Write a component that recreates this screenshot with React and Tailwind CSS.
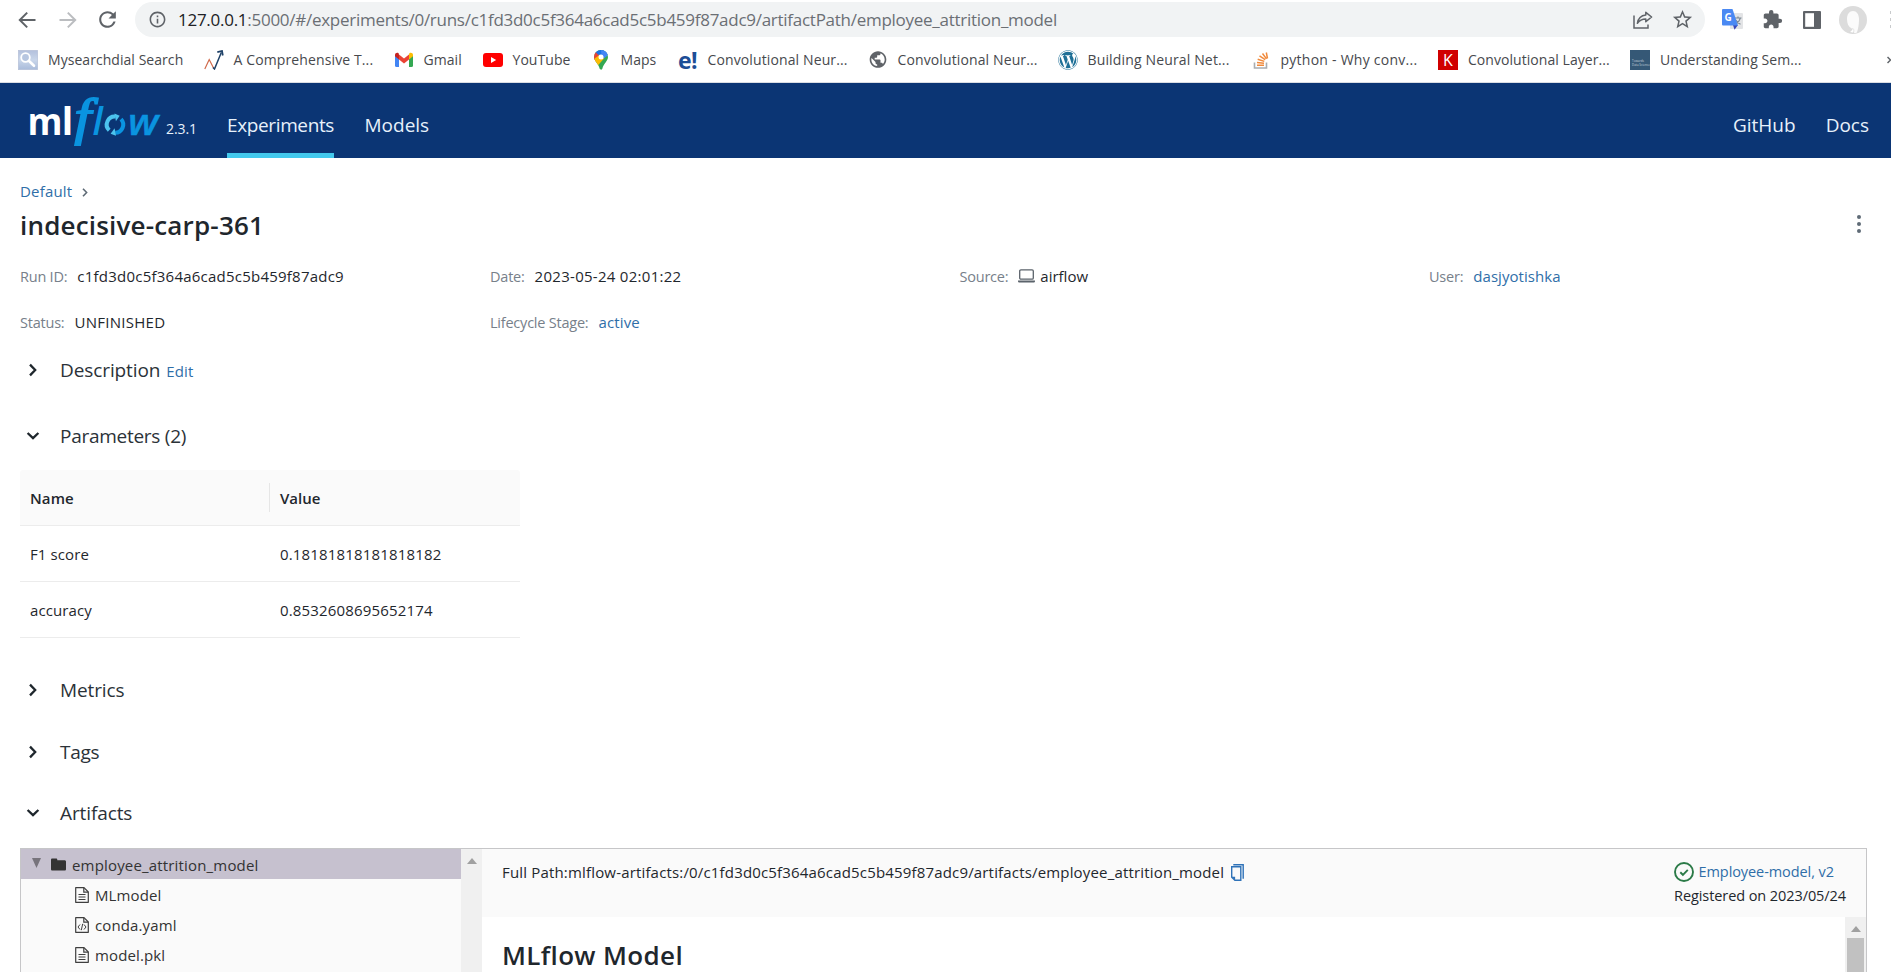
import React from "react";
import { MdExtension, MdInfoOutline, MdPublic, MdRefresh, MdStarBorder } from "react-icons/md";
import { FaWordpress } from "react-icons/fa";

/* ---------- browser chrome icons ---------- */

const Arrow = ({ className }) => (
  <svg viewBox="0 0 18 18" className={className} fill="none" stroke="currentColor" strokeWidth="2">
    <path d="M17.5 9H2M9.2 1.6 1.8 9l7.4 7.4" />
  </svg>
);

const ShareIcon = () => (
  <svg viewBox="0 0 20 18" className="h-[18px] w-[20px] text-[#5f6368]" fill="none" stroke="currentColor" strokeWidth="1.5">
    <path d="M1 4.500v12.500h14v-3.500" />
    <path d="M12.800 1.300 18.600 6l-5.800 4.700V8C8.800 8 6.400 9.400 4.400 12.300 5.100 7.800 8 4.500 12.800 4z" strokeLinejoin="round" />
  </svg>
);

const TranslateIcon = () => (
  <svg viewBox="0 0 21 21" className="h-[21px] w-[21px]">
    <rect x="8" y="4" width="13" height="16" rx="1" fill="#e3e4e6" />
    <path d="M12.500 9h7M16 7.500V9M18.300 9c-.5 2.500-2.300 4.600-4.600 6M13.800 11c1 2 2.600 3.400 4.700 4.300" stroke="#7b8794" strokeWidth="1.2" fill="none" />
    <path d="M11 16h5l-3.500 4.800z" fill="#3a49b8" />
    <path d="M1 0h9.500L16 16.500H1a1 1 0 0 1-1-1V1a1 1 0 0 1 1-1z" fill="#4a89f3" />
    <text x="2.500" y="12" fontSize="10" fontWeight="700" fill="#fff" fontFamily="Open Sans, sans-serif">G</text>
  </svg>
);

const SidePanelIcon = () => (
  <svg viewBox="0 0 18 18" className="h-[18px] w-[18px]">
    <rect width="18" height="18" rx="1" fill="#5f6368" />
    <rect x="2.200" y="2.200" width="8.800" height="13.600" fill="#fff" />
  </svg>
);

const Avatar = () => (
  <svg viewBox="0 0 28 28" className="h-[28px] w-[28px]">
    <circle cx="14" cy="14" r="14" fill="#dcdcdc" />
    <path d="M8 13c0-5 2.500-8 6-8s6 3 6 8c0 6-1 11-2.200 13.400-1 .8-2 .8-3 0-.6-1-.8-2.600-2-3.800C9.500 21 8 17.500 8 13z" fill="#fbfbfb" />
    <path d="M13.500 22.500c1.500 0 1.800 2 .8 4.500l-4-.8c1-.8 2.500-1.500 3.200-3.700z" fill="#fff" stroke="#cfcfcf" strokeWidth=".5" />
  </svg>
);

/* ---------- bookmark icons ---------- */

const SearchDial = () => (
  <svg viewBox="0 0 20 20" className="h-5 w-5">
    <defs>
      <linearGradient id="dial" x1="0" y1="0" x2="0" y2="1">
        <stop offset="0" stopColor="#b3c0dc" />
        <stop offset=".5" stopColor="#c9d6ea" />
        <stop offset="1" stopColor="#a9bbda" />
      </linearGradient>
    </defs>
    <rect x=".3" y=".3" width="19.400" height="19.400" fill="url(#dial)" stroke="#b4bfd6" strokeWidth=".6" />
    <circle cx="7.500" cy="7.500" r="4.300" fill="#b7c6e0" stroke="#fff" strokeWidth="1.800" />
    <path d="M10.800 10.800l5.200 5" stroke="#fff" strokeWidth="2.600" strokeLinecap="round" />
  </svg>
);

const TrendIcon = () => (
  <svg viewBox="0 0 20 20" className="h-5 w-5" fill="none">
    <path d="M.8 19 5.200 9.500 9.800 18.500" stroke="#d0694a" strokeWidth="1.200" />
    <path d="M9 17.500 10.500 19 17.300 2.500" stroke="#1f4268" strokeWidth="1.500" />
    <path d="M13.300 2.200 18 1l.8 4.500" stroke="#1f4268" strokeWidth="1.800" />
  </svg>
);

const GmailIcon = () => (
  <svg viewBox="0 0 20 20" className="h-5 w-5">
    <path d="M1 5v10.500A1.500 1.500 0 0 0 2.500 17H5V8.500z" fill="#4285f4" />
    <path d="M15 8.500V17h2.500a1.500 1.500 0 0 0 1.500-1.500V5z" fill="#34a853" />
    <path d="M15 4.500v5l4-3.200V5c0-2-2.200-2.800-3.600-1.700z" fill="#fbbc04" />
    <path d="M5 9.500v-5l5 4 5-4v5l-5 4z" fill="#ea4335" />
    <path d="M1 5v1.300l4 3.200v-5l-.4-1.200C3.200 2.200 1 3 1 5z" fill="#c5221f" />
  </svg>
);

const YouTubeIcon = () => (
  <svg viewBox="0 0 20 20" className="h-5 w-5">
    <rect y="3" width="20" height="14" rx="3" fill="#f00" />
    <path d="M8 7v6l5.200-3z" fill="#fff" />
  </svg>
);

const MapsIcon = () => (
  <svg viewBox="0 0 20 20" className="h-5 w-5">
    <defs>
      <clipPath id="pin">
        <path d="M10 0a7 7 0 0 1 7 7c0 4-4.500 6.500-5.600 11.500-.3 1.600-2.500 1.600-2.800 0C7.500 13.500 3 11 3 7a7 7 0 0 1 7-7z" />
      </clipPath>
    </defs>
    <g clipPath="url(#pin)">
      <rect width="20" height="20" fill="#34a853" />
      <path d="M0 0h20v3L10 8 0 0z" fill="#1a73e8" />
      <path d="M10 0h10v3l-9 7z" fill="#4285f4" />
      <path d="M0 0l4.500 2.200L10 7 5 12 0 9z" fill="#ea4335" />
      <path d="M2 9.800 9 4.500l4 4-7 8z" fill="#fbbc04" />
    </g>
    <circle cx="10" cy="7" r="2.500" fill="#fff" />
  </svg>
);

const EIcon = () => (
  <span className="flex h-5 w-5 items-center justify-center text-[23px] font-bold leading-[20px] tracking-[-0.5px] text-[#1d4e96]">e!</span>
);

const GlobeIcon = () => <MdPublic className="h-[21px] w-5 shrink-0 text-[#5f6368]" />;
const WpIcon = () => <FaWordpress className="h-5 w-5 text-[#1e6f96]" />;

const StackIcon = () => (
  <svg viewBox="0 0 20 20" className="h-5 w-5" fill="none">
    <path d="M3.500 12.500V18h12v-5.500" stroke="#a9adb1" strokeWidth="1.600" />
    <path d="M6 15.300h7M6 12.400l7 .9M6.700 9.200l6.600 2.200M8.500 5.900l5.700 3.700M11.500 3.500l4 5.400M15.300 2.500l1.200 6" stroke="#f08a3c" strokeWidth="1.500" />
  </svg>
);

const KIcon = () => (
  <span className="flex h-5 w-5 items-center justify-center bg-[#d00000] text-[16px] leading-none text-white">K</span>
);

const TdsIcon = () => (
  <span className="flex h-5 w-5 flex-col justify-end bg-[#355876] pb-[3px] pl-[2px] text-[3px] leading-[4px] text-[#c9d5df]">
    <span>Towards</span>
    <span>Data Science</span>
  </span>
);

const BOOKMARKS = [
  { icon: SearchDial, label: "Mysearchdial Search", box: "w-[185.5px]" },
  { icon: TrendIcon, label: "A Comprehensive T...", box: "w-[190px]", tracking: "tracking-[0.12px]" },
  { icon: GmailIcon, label: "Gmail", box: "w-[89px]" },
  { icon: YouTubeIcon, label: "YouTube", box: "w-[108px]" },
  { icon: MapsIcon, label: "Maps", box: "w-[87px]" },
  { icon: EIcon, label: "Convolutional Neur...", box: "w-[190px]", tracking: "tracking-[0.12px]" },
  { icon: GlobeIcon, label: "Convolutional Neur...", box: "w-[190px]", tracking: "tracking-[0.12px]" },
  { icon: WpIcon, label: "Building Neural Net...", box: "w-[193px]", tracking: "tracking-[0.15px]" },
  { icon: StackIcon, label: "python - Why conv...", box: "w-[187.5px]", tracking: "tracking-[0.25px]" },
  { icon: KIcon, label: "Convolutional Layer...", box: "w-[192px]" },
  { icon: TdsIcon, label: "Understanding Sem...", box: "w-[180px]" },
];

function BrowserBar() {
  return (
    <div className="bg-white">
      <div className="flex h-[38px] items-center pl-[18px] pt-[1px]">
        <Arrow className="h-[18px] w-[18px] shrink-0 text-[#5f6368]" />
        <Arrow className="ml-[23px] h-[18px] w-[18px] shrink-0 rotate-180 text-[#bbbdc0]" />
        <MdRefresh className="ml-[18px] h-[25px] w-[25px] shrink-0 text-[#5f6368]" />
        <div className="ml-[15px] flex h-[35px] w-[1570px] shrink-0 items-center rounded-full bg-[#f1f3f4] pl-[13px] pr-[11px]">
          <MdInfoOutline className="h-[19px] w-[19px] text-[#5f6368]" />
          <div className="ml-[11px] flex-1 whitespace-nowrap text-[17px] tracking-[-0.27px] text-[#6b6f74]">
            <span className="text-[#202124]">127.0.0.1</span>
            :5000/#/experiments/0/runs/c1fd3d0c5f364a6cad5c5b459f87adc9/artifactPath/employee_attrition_model
          </div>
          <ShareIcon />
          <MdStarBorder className="ml-[18px] h-[23px] w-[23px] text-[#5f6368]" />
        </div>
        <div className="ml-[17px] shrink-0"><TranslateIcon /></div>
        <MdExtension className="ml-[19px] h-[21px] w-[21px] shrink-0 text-[#5f6368]" />
        <div className="ml-[20px] shrink-0"><SidePanelIcon /></div>
        <div className="ml-[18px] shrink-0"><Avatar /></div>
        <div className="ml-[23px] flex w-[2px] shrink-0 flex-col gap-[4px] overflow-hidden">
          <i className="h-[3px] w-[3px] bg-[#c8cacc]" />
          <i className="h-[3px] w-[3px] bg-[#c8cacc]" />
          <i className="h-[3px] w-[3px] bg-[#c8cacc]" />
        </div>
      </div>
      <div className="flex h-[45px] items-center border-b border-[#dadde3] pb-[1px] pl-[18px]">
        {BOOKMARKS.map(({ icon: Icon, label, box, tracking = "tracking-[0.05px]" }, i) => (
          <div key={i} className={"flex shrink-0 items-center gap-[10px] whitespace-nowrap text-[14px] text-[#47494d] " + box}>
            <Icon />
            <span className={"pb-[1px] " + tracking}>{label}</span>
          </div>
        ))}
        <svg viewBox="0 0 4 8" className="ml-auto h-[8px] w-[4px]" fill="none" stroke="#5f6368" strokeWidth="1.500">
          <path d="M.5 1l3 3-3 3" />
        </svg>
      </div>
    </div>
  );
}

/* ---------- application header ---------- */

const Logo = () => (
  <svg viewBox="0 0 132 54" className="h-[54px] w-[132px] overflow-visible" fontFamily="Open Sans, sans-serif">
    <text x="-2.500" y="40" fontSize="37" fontWeight="700" fill="#fff" textLength="35" lengthAdjust="spacingAndGlyphs">m</text>
    <text x="31.800" y="40" fontSize="37.500" fontWeight="700" fill="#fff">l</text>
    <text transform="translate(44.500 38.500) scale(1.080 .93)" fontSize="55" fontStyle="italic" fontFamily="Liberation Serif, serif" fill="#0a94e0" stroke="#0a94e0" strokeWidth="1.900">f</text>
    <text x="62.500" y="40" fontSize="37.500" fontWeight="600" fontStyle="italic" fill="#0a94e0">l</text>
    <path d="M79.200 35.300a8 8 0 0 1 6.300-13.700" fill="none" stroke="#4cc3ee" strokeWidth="4" />
    <path d="M84.500 18.600l5.200 2.200-3.800 5.400z" fill="#4cc3ee" />
    <path d="M91 24.200a8 8 0 0 1-5.800 13.500" fill="none" stroke="#0a94e0" strokeWidth="4" />
    <path d="M86 40.800l-5.400-2 4-5.500z" fill="#4cc3ee" />
    <text x="98" y="40" fontSize="36" fontWeight="600" fontStyle="italic" fill="#0a94e0" stroke="#0a94e0" strokeWidth=".4" textLength="30.500" lengthAdjust="spacingAndGlyphs">w</text>
  </svg>
);

function Header() {
  return (
    <header className="flex h-[75px] bg-[#0b3574] pl-[30px] pr-[22px] text-[19px] text-[#e7f1fb]">
      <div className="flex w-[197px] pt-[12px]">
        <Logo />
        <span className="ml-[4px] mt-[24px] text-[14px] leading-[20px] tracking-[-0.1px]">2.3.1</span>
      </div>
      <nav className="flex gap-[30.500px]">
        <div className="box-border h-[75px] w-[107px] whitespace-nowrap border-b-[5px] border-[#43c9ed] pt-[29px] leading-[26px] tracking-[-0.37px]">Experiments</div>
        <div className="pt-[29px] leading-[26px]">Models</div>
      </nav>
      <nav className="ml-auto flex gap-[30px] pt-[29px] leading-[26px]">
        <span>GitHub</span>
        <span>Docs</span>
      </nav>
    </header>
  );
}

/* ---------- run page ---------- */

const Chevron = ({ open }) => (
  <span className="flex w-[40px] shrink-0 justify-start pb-[1px] pl-[5px]">
    <svg viewBox="0 0 16 16" className={"h-[16px] w-[16px] " + (open ? "rotate-90" : "")} fill="none" stroke="#1f272d" strokeWidth="2.300">
      <path d="M5 2.600l5.200 5.400L5 13.400" />
    </svg>
  </span>
);

const Section = ({ title, open, size, tracking, children }) => (
  <div className={"flex items-center " + size}>
    <Chevron open={open} />
    <span className={"text-[19px] text-[#2b3238] " + tracking}>{title}</span>
    {children}
  </div>
);

const Field = ({ label, value, link, icon, tracking = "" }) => (
  <div className="flex items-baseline whitespace-nowrap leading-[46px]">
    <span className="mr-[10px] text-[14.5px] tracking-[-0.22px] text-[#77808a]">{label}</span>
    {icon}
    <span className={(link ? "text-[#2f6ea8] " : "text-[#1f272d] ") + tracking}>{value}</span>
  </div>
);

const Laptop = () => (
  <svg viewBox="0 0 17 14" className="mr-[5px] h-[14px] w-[17px] self-center">
    <rect x="1.700" y=".8" width="13.600" height="9.400" rx="1.200" fill="none" stroke="#5b636b" strokeWidth="1.300" />
    <path d="M0 11.500h17v.7c0 .9-.7 1.300-1.500 1.300h-14C.7 13.500 0 13.100 0 12.200z" fill="#5b636b" />
  </svg>
);

const FileIcon = ({ code }) => (
  <svg viewBox="0 0 14 16" className="h-[16px] w-[14px]" fill="none" stroke="#3f3f3f" strokeWidth="1.200">
    <path d="M.7.700h8.300l4.300 4.300v10.300H.7z" strokeLinejoin="round" />
    <path d="M8.800.800v4.400h4.400" />
    {code ? <path d="M5 7.500 3 10l2 2.500M9 7.500l2 2.500-2 2.500M7.700 6.800l-1.400 6.400" strokeWidth="1" /> : <path d="M3.500 7.500h7M3.500 10h7M3.500 12.500h7" strokeWidth="1" />}
  </svg>
);

const UpTriangle = () => (
  <svg viewBox="0 0 10 6" className="h-[6px] w-[10px]" fill="#a0a0a0">
    <path d="M0 6 5 0l5 6z" />
  </svg>
);

const PARAMS = [
  ["F1 score", "0.18181818181818182"],
  ["accuracy", "0.8532608695652174"],
];

function ParamsTable() {
  return (
    <div className="ml-[20px] w-[500px] text-[#1f272d]">
      <div className="flex h-[56px] items-center rounded-t-[3px] border-b border-[#ececec] bg-[#fafafa] font-semibold">
        <div className="flex h-[29px] w-[250px] items-center border-r border-[#e6e6e6] pl-[10px] pt-[1px] tracking-[0.1px]">Name</div>
        <div className="pl-[10px] pt-[1px]">Value</div>
      </div>
      {PARAMS.map(([k, v]) => (
        <div key={k} className="flex h-[56px] items-center border-b border-[#ececec] pt-[2px]">
          <div className="w-[250px] pl-[10px] tracking-[0.11px]">{k}</div>
          <div className="pl-[10px] tracking-[0.17px]">{v}</div>
        </div>
      ))}
    </div>
  );
}

function Artifacts() {
  return (
    <div className="ml-[20px] mt-[5px] flex h-[124px] w-[1847px] overflow-hidden border border-b-0 border-[#c6c6c8]">
      <div className="w-[440px] bg-[#fafafa] text-[#333]">
        <div className="flex h-[30px] items-center bg-[#c6c1cf] pl-[11px]">
          <svg viewBox="0 0 9 10" className="mb-[2px] h-[10px] w-[9px]" fill="#77747c"><path d="M0 0h9L4.500 10z" /></svg>
          <svg viewBox="0 0 16 13" className="ml-[10px] mt-[1px] h-[13px] w-[15px]" fill="#333"><path d="M1.300 0h4.200c.7 0 1.200.5 1.200 1.200v.8h7.800c.8 0 1.500.6 1.500 1.400v8.200c0 .8-.6 1.400-1.400 1.400H1.400C.6 13 0 12.400 0 11.600V1.300C0 .6.600 0 1.300 0z" /></svg>
          <span className="ml-[6px] pt-[2px] tracking-[0.17px]">employee_attrition_model</span>
        </div>
        {[["MLmodel", false], ["conda.yaml", true], ["model.pkl", false]].map(([name, code]) => (
          <div key={name} className="flex h-[30px] items-center gap-[6px] pl-[54px] pt-[2px] tracking-[0.12px]">
            <FileIcon code={code} />
            <span>{name}</span>
          </div>
        ))}
      </div>
      <div className="flex w-[21px] justify-center bg-[#f0f0f0] pt-[9px]"><UpTriangle /></div>
      <div className="flex-1">
        <div className="flex h-[68px] items-start justify-between bg-[#fafafa] pl-[20px] pr-[20px]">
          <div className="mt-[11px] flex h-[24px] items-center whitespace-nowrap text-[#1f272d]">
            <span className="tracking-[0.17px]">Full Path:mlflow-artifacts:/0/c1fd3d0c5f364a6cad5c5b459f87adc9/artifacts/employee_attrition_model</span>
            <svg viewBox="0 0 13 17" className="ml-[7px] h-[17px] w-[13px]" fill="none" stroke="#2f72b8" strokeWidth="1.400">
              <path d="M2.300.800h9.900v13.900" />
              <path d="M.7 2.800v10.300l3.200 3.200h5.900V2.800z" />
              <path d="M.7 12.800h3.400v3.400z" fill="#2f72b8" stroke="none" />
            </svg>
          </div>
          <div className="pt-[10px] text-[14.5px] tracking-[-0.08px] text-[#1f272d]">
            <div className="flex h-[25px] items-center">
              <svg viewBox="0 0 20 20" className="h-[20px] w-[20px] shrink-0" fill="none" stroke="#2b7a47" strokeWidth="1.900">
                <circle cx="10" cy="10" r="9" />
                <path d="M6.300 10.300l2.600 2.500 4.900-5" />
              </svg>
              <span className="ml-[4.500px] text-[#2f6ea8]">Employee-model, v2</span>
            </div>
            <div className="h-[24px] leading-[24px]">Registered on 2023/05/24</div>
          </div>
        </div>
        <div className="flex h-[55px] justify-between bg-white">
          <h2 className="h-[55px] pl-[20px] pt-[21px] text-[26px] font-semibold leading-[34px] tracking-[0.35px] text-[#1f272d]">MLflow Model</h2>
          <div className="flex w-[21px] flex-col items-center bg-[#f0f0f0] pt-[9px]">
            <UpTriangle />
            <div className="mt-[6px] h-[34px] w-[17px] bg-[#c1c1c1]" />
          </div>
        </div>
      </div>
    </div>
  );
}

export default function App() {
  return (
    <div className="h-[972px] w-[1891px] overflow-hidden bg-white font-['Open_Sans','Noto_Sans',sans-serif] text-[15px]">
      <BrowserBar />
      <Header />
      <main>
        <div className="mt-[21px] flex h-[24px] items-center pl-[20px]">
          <span className="tracking-[0.18px] text-[#2f6ea8]">Default</span>
          <svg viewBox="0 0 6 9" className="ml-[10px] mt-[3px] h-[9px] w-[6px]" fill="none" stroke="#5f6b76" strokeWidth="1.600"><path d="M1 .8l3.600 3.700L1 8.200" /></svg>
        </div>
        <div className="flex h-[42px] items-center justify-between pl-[20px] pr-[30px]">
          <h1 className="pt-[2px] text-[26px] font-semibold tracking-[0.18px] text-[#1f272d]">indecisive-carp-361</h1>
          <div className="flex flex-col gap-[3px]">
            <i className="h-[4px] w-[4px] rounded-full bg-[#5f6b76]" />
            <i className="h-[4px] w-[4px] rounded-full bg-[#5f6b76]" />
            <i className="h-[4px] w-[4px] rounded-full bg-[#5f6b76]" />
          </div>
        </div>
        <div className="mt-[8px] grid auto-rows-[46px] grid-cols-[470px_469.500px_469.500px_1fr] pl-[20px]">
          <Field label="Run ID:" value="c1fd3d0c5f364a6cad5c5b459f87adc9" tracking="tracking-[0.23px]" />
          <Field label="Date:" value="2023-05-24 02:01:22" tracking="tracking-[0.28px]" />
          <Field label="Source:" value="airflow" icon={<Laptop />} />
          <Field label="User:" value="dasjyotishka" link tracking="tracking-[0.06px]" />
          <Field label="Status:" value="UNFINISHED" tracking="tracking-[0.28px]" />
          <Field label="Lifecycle Stage:" value="active" link tracking="tracking-[0.15px]" />
        </div>
        <div className="flex flex-col pl-[20px]">
          <Section title="Description" size="h-[50px]" tracking="tracking-[-0.1px]">
            <span className="ml-[6px] pt-[2px] tracking-[0.09px] text-[#2f6ea8]">Edit</span>
          </Section>
          <Section title="Parameters (2)" open size="mt-[7px] h-[68px]" tracking="tracking-[-0.27px]" />
        </div>
        <ParamsTable />
        <div className="mt-[22px] flex flex-col pl-[20px]">
          <Section title="Metrics" size="h-[61px]" tracking="tracking-[-0.12px]" />
          <Section title="Tags" size="h-[61px] pt-[1px]" tracking="tracking-[-0.3px]" />
          <Section title="Artifacts" open size="h-[61px] pt-[1px]" tracking="tracking-[-0.1px]" />
        </div>
        <Artifacts />
      </main>
    </div>
  );
}
